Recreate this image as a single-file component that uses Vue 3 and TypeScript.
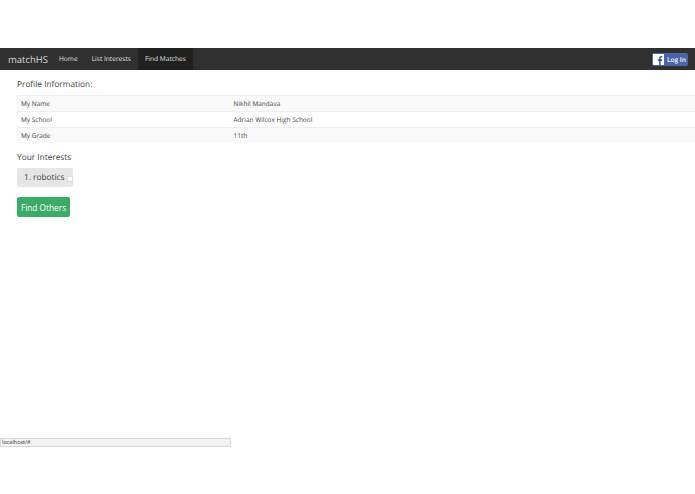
<script setup lang="ts">
const links = [
  { label: 'Home', active: false },
  { label: 'List Interests', active: false },
  { label: 'Find Matches', active: true },
]
const rows = [
  ['My Name', 'Nikhil Mandava'],
  ['My School', 'Adrian Wilcox High School'],
  ['My Grade', '11th'],
]
</script>

<template>
  <div class="page">
    <nav class="navbar">
      <span class="brand">matchHS</span>
      <a v-for="l in links" :key="l.label" class="link" :class="{ active: l.active }">{{ l.label }}</a>
      <span class="fb">
        <svg class="fb-icon" viewBox="0 0 11 11" width="11" height="11">
          <rect width="11" height="11" fill="#fff" />
          <path d="M7.6 11V6.9h1.3l.2-1.6H7.6v-1c0-.5.1-.8.8-.8h.8V2.1C9 2.1 8.600 2 8.100 2 7 2 6.100 2.700 6.100 4.100v1.200H4.800v1.600h1.300V11z" fill="#3b5998" />
        </svg>
        <span class="fb-text">Log In</span>
      </span>
    </nav>
    <main class="content">
      <h3 class="title">Profile Information:</h3>
      <div class="table">
        <div v-for="r in rows" :key="r[0]" class="row">
          <span class="cell-l">{{ r[0] }}</span>
          <span>{{ r[1] }}</span>
        </div>
      </div>
      <h3 class="title interests">Your Interests</h3>
      <div class="chip">1. robotics<span class="box"></span></div>
      <button class="btn">Find Others</button>
    </main>
    <div class="status">localhost/#</div>
  </div>
</template>

<style>
html, body { margin: 0; background: #fff; }
</style>

<style scoped>
.page {
  width: 695px;
  height: 494px;
  overflow: hidden;
  padding-top: 48px;
  box-sizing: border-box;
  font-family: "Open Sans", sans-serif;
  color: #444;
  display: flex;
  flex-direction: column;
  text-rendering: geometricPrecision;
}
.navbar {
  height: 22px;
  background: #303030;
  display: flex;
  align-items: center;
  flex-shrink: 0;
}
.brand {
  color: #d8d8d8;
  font-size: 9.500px;
  padding: 0 7px 0 8px;
  width: 37px;
  white-space: nowrap;
}
.link {
  color: #e0e0e0;
  font-size: 6.600px;
  height: 22px;
  line-height: 22px;
  padding: 0 7px;
  white-space: nowrap;
}
.link.active {
  background: #202020;
}
.fb {
  margin-left: auto;
  margin-right: 7px;
  width: 36px;
  height: 13px;
  background: #4a66a8;
  border-radius: 2px;
  display: flex;
  align-items: center;
  color: #fff;
  font-size: 6.500px;
  font-weight: 600;
  white-space: nowrap;
}
.fb-icon { margin-left: 1px; }
.fb-text { margin-left: 3px; }
.content {
  padding-left: 17px;
  height: 368px;
  flex-shrink: 0;
}
.title {
  margin: 0;
  font-weight: 400;
  font-size: 8.300px;
  line-height: 12px;
  padding-top: 9px;
}
.table {
  margin-top: 4px;
  font-size: 6.500px;
}
.row {
  display: flex;
  height: 16px;
  align-items: center;
  border-top: 1px solid #eee;
  box-sizing: border-box;
  padding-left: 4px;
}
.row:nth-child(odd) { background: #f9f9f9; }
.cell-l { width: 212.500px; }
.interests { padding-top: 9px; }
.chip {
  margin-top: 4px;
  width: 56px;
  height: 19px;
  box-sizing: border-box;
  background: #e6e6e6;
  border-radius: 2px;
  font-size: 8.300px;
  display: flex;
  align-items: center;
  padding-left: 7px;
  white-space: nowrap;
}
.box {
  width: 4px;
  height: 4px;
  background: #fff;
  border: 0.5px solid #ddd;
  margin-left: 2px;
  margin-top: 2px;
}
.btn {
  display: block;
  margin-top: 10px;
  width: 53px;
  height: 20px;
  padding: 0;
  border: 0;
  border-radius: 2px;
  background: #3cab68;
  color: #fff;
  font-family: inherit;
  font-size: 8.300px;
}
.status {
  width: 231px;
  height: 9px;
  box-sizing: border-box;
  background: #f2f2f2;
  border: 1px solid #d8d8d8;
  font-size: 5.500px;
  line-height: 7px;
  padding-left: 1px;
  color: #333;
}
</style>
